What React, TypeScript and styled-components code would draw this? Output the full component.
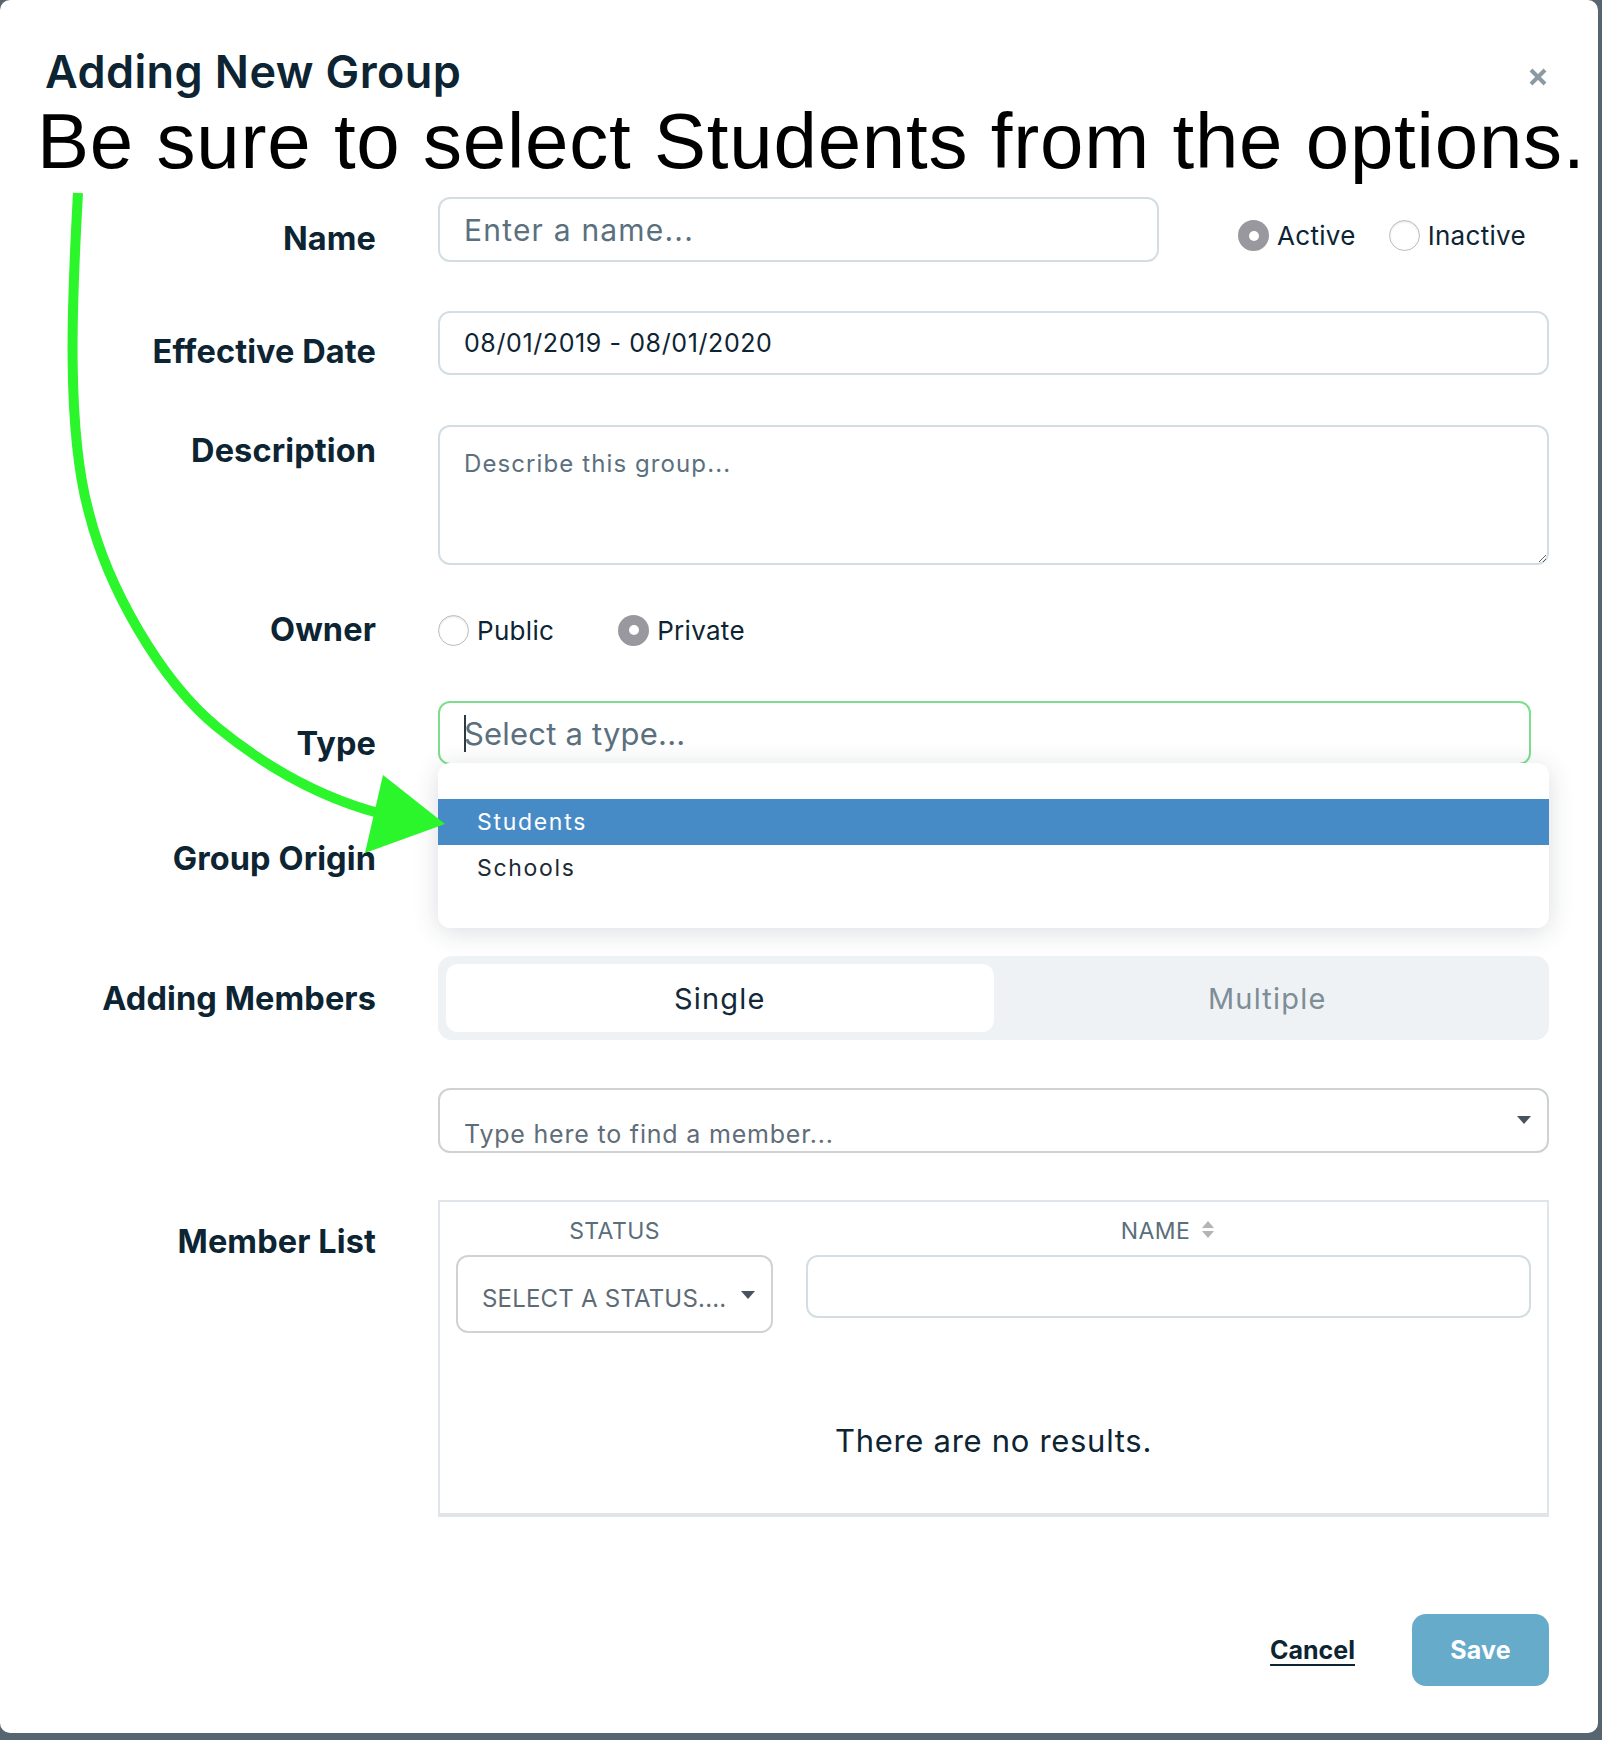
import React from 'react';
import styled, { createGlobalStyle } from 'styled-components';

const GlobalStyle = createGlobalStyle`
  html, body { margin: 0; padding: 0; }
  body { background: #56656f; font-family: Inter, "Open Sans", sans-serif; }
  * { box-sizing: border-box; }
`;

const Backdrop = styled.div`
  width: 1602px;
  height: 1740px;
  background: #56656f;
  overflow: hidden;
`;

const Modal = styled.div`
  position: relative;
  width: 1598px;
  height: 1733px;
  background: #ffffff;
  border-radius: 10px;
  display: flex;
  flex-direction: column;
  font-family: Inter, "Open Sans", sans-serif;
`;

const Header = styled.header`
  display: flex;
  justify-content: space-between;
  align-items: flex-start;
  padding: 49px 51px 0 45px;
`;

const Title = styled.h1`
  margin: 0;
  font-weight: 600;
  font-size: 45px;
  line-height: 46px;
  letter-spacing: 0.4px;
  color: #0d2433;
`;

const CloseButton = styled.button`
  margin-top: 19px;
  width: 18px;
  height: 18px;
  padding: 0;
  border: 0;
  background: none;
  display: flex;
`;

const Instruction = styled.p`
  margin: 8px 0 0;
  padding-left: 37px;
  font-family: "Liberation Sans", Arial, sans-serif;
  font-size: 78px;
  line-height: 77px;
  letter-spacing: 0.8px;
  color: #000;
  white-space: nowrap;
`;

const Form = styled.div`
  display: flex;
  flex-direction: column;
`;

const Row = styled.div<{ $mt: number; $h?: number }>`
  display: flex;
  align-items: flex-start;
  margin-top: ${(p) => p.$mt}px;
  ${(p) => (p.$h ? `height: ${p.$h}px;` : '')}
`;

const Label = styled.label<{ $pt: number }>`
  width: 376px;
  flex-shrink: 0;
  text-align: right;
  padding-top: ${(p) => p.$pt}px;
  font-weight: 700;
  font-size: 32.5px;
  line-height: 31px;
  letter-spacing: 0.1px;
  color: #0d2433;
  white-space: nowrap;
`;

const Control = styled.div<{ $h?: number }>`
  position: relative;
  margin-left: 62px;
  width: 1111px;
  display: flex;
  align-items: center;
  ${(p) => (p.$h ? `height: ${p.$h}px;` : '')}
`;

const TextField = styled.input<{ $w?: number; $h: number; $fs: number; $ls?: number }>`
  width: ${(p) => (p.$w ? `${p.$w}px` : '100%')};
  height: ${(p) => p.$h}px;
  flex-shrink: 0;
  border: 2px solid #d3dde2;
  border-radius: 12px;
  padding: 0 24px;
  font-family: Inter, "Open Sans", sans-serif;
  font-size: ${(p) => p.$fs}px;
  letter-spacing: ${(p) => p.$ls ?? 0}px;
  color: #0d2433;
  background: #fff;
  outline: none;
  &::placeholder {
    color: #5b707e;
    opacity: 1;
  }
`;

const TextArea = styled.textarea`
  width: 1111px;
  height: 140px;
  border: 2px solid #d3dde2;
  border-radius: 12px;
  padding: 23px 24px;
  font-family: Inter, "Open Sans", sans-serif;
  font-size: 24px;
  line-height: 28px;
  letter-spacing: 1.1px;
  color: #0d2433;
  resize: vertical;
  outline: none;
  &::placeholder {
    color: #5b707e;
    opacity: 1;
  }
`;

const RadioGroup = styled.div<{ $ml?: number; $gap: number }>`
  display: flex;
  align-items: center;
  gap: ${(p) => p.$gap}px;
  margin-left: ${(p) => p.$ml ?? 0}px;
  align-self: ${(p) => (p.$ml ? 'flex-start' : 'center')};
  margin-top: ${(p) => (p.$ml ? '23px' : '0')};
`;

const RadioOption = styled.label`
  display: flex;
  align-items: center;
  gap: 8px;
  font-size: 26px;
  line-height: 31px;
  letter-spacing: 0.3px;
  color: #0d2433;
`;

const RadioDot = styled.span<{ $checked?: boolean }>`
  width: 31px;
  height: 31px;
  border-radius: 50%;
  display: flex;
  align-items: center;
  justify-content: center;
  flex-shrink: 0;
  background: ${(p) => (p.$checked ? '#98989e' : '#fff')};
  border: ${(p) => (p.$checked ? '0' : '1px solid #bdbdbd')};
  box-shadow: ${(p) => (p.$checked ? 'none' : 'inset 0 1px 2px rgba(0,0,0,0.12)')};
  &::after {
    content: '';
    width: 10px;
    height: 10px;
    border-radius: 50%;
    background: #fff;
    display: ${(p) => (p.$checked ? 'block' : 'none')};
  }
`;

const TypeBox = styled.div`
  width: 1093px;
  height: 64px;
  border: 2px solid #7ddf8d;
  border-radius: 12px;
  padding: 0 24px;
  display: flex;
  align-items: center;
  font-size: 31px;
  letter-spacing: 0.2px;
  color: #5b707e;
`;

const TextCaret = styled.span`
  width: 2px;
  height: 37px;
  background: #2b3a44;
  margin-right: -2px;
`;

const Menu = styled.ul`
  position: absolute;
  top: 62px;
  left: 0;
  width: 1111px;
  height: 165px;
  margin: 0;
  padding: 36px 0 0;
  list-style: none;
  background: #fff;
  border-radius: 12px;
  box-shadow: 0 4px 26px rgba(30, 45, 60, 0.16);
  z-index: 2;
`;

const MenuItem = styled.li<{ $active?: boolean }>`
  height: 46px;
  display: flex;
  align-items: center;
  padding-left: 39px;
  font-size: 23px;
  letter-spacing: 1.7px;
  color: ${(p) => (p.$active ? '#ffffff' : '#1c2a34')};
  background: ${(p) => (p.$active ? '#468bc6' : 'transparent')};
`;

const PlainSelect = styled.div`
  width: 1111px;
  height: 64px;
  border: 2px solid #d3dde2;
  border-radius: 12px;
`;

const Segmented = styled.div`
  width: 1111px;
  height: 84px;
  background: #eef2f5;
  border-radius: 14px;
  padding: 8px;
  display: grid;
  grid-template-columns: 1fr 1fr;
`;

const Segment = styled.div<{ $active?: boolean }>`
  border-radius: 12px;
  background: ${(p) => (p.$active ? '#ffffff' : 'transparent')};
  display: flex;
  align-items: center;
  justify-content: center;
  font-size: 29px;
  letter-spacing: 1.2px;
  color: ${(p) => (p.$active ? '#13293a' : '#7f8d96')};
`;

const SearchSelect = styled.div`
  width: 1111px;
  height: 65px;
  border: 2px solid #cfd2d5;
  border-radius: 12px;
  padding: 0 16px 0 24px;
  display: flex;
  justify-content: space-between;
  align-items: flex-start;
`;

const SearchText = styled.span`
  margin-top: 32px;
  font-size: 25px;
  line-height: 25px;
  letter-spacing: 0.8px;
  color: #5f6d78;
`;

const DownCaret = styled.span<{ $mt: number }>`
  margin-top: ${(p) => p.$mt}px;
  width: 0;
  height: 0;
  border-left: 7.5px solid transparent;
  border-right: 7.5px solid transparent;
  border-top: 8px solid #48535d;
  flex-shrink: 0;
`;

const ListBox = styled.div`
  width: 1111px;
  height: 317px;
  border: 2px solid #dfe5ea;
  border-bottom-width: 4px;
  padding: 0 16px;
  display: flex;
  flex-direction: column;
`;

const ColumnRow = styled.div`
  display: flex;
  gap: 33px;
  align-items: flex-start;
`;

const Column = styled.div<{ $w?: number }>`
  ${(p) => (p.$w ? `width: ${p.$w}px; flex-shrink: 0;` : 'flex: 1;')}
  display: flex;
  flex-direction: column;
`;

const ColumnHead = styled.div`
  padding-top: 18px;
  height: 53px;
  display: flex;
  justify-content: center;
  align-items: flex-start;
  gap: 10px;
  font-size: 23px;
  line-height: 22px;
  letter-spacing: 0.4px;
  color: #5a6e7b;
`;

const StatusSelect = styled.div`
  height: 78px;
  border: 2px solid #cfd3d6;
  border-radius: 12px;
  padding: 0 16px 0 24px;
  display: flex;
  align-items: flex-start;
  gap: 15px;
`;

const StatusText = styled.span`
  margin-top: 29px;
  font-size: 24px;
  line-height: 25px;
  letter-spacing: 0.2px;
  color: #5e6a74;
  white-space: nowrap;
`;

const FilterInput = styled.div`
  height: 63px;
  border: 2px solid #d3dde2;
  border-radius: 12px;
`;

const Empty = styled.div`
  margin-top: 93px;
  text-align: center;
  font-size: 31px;
  line-height: 30px;
  letter-spacing: 0.7px;
  color: #0d2433;
`;

const SortIcon = styled.svg`
  flex-shrink: 0;
`;

const Footer = styled.div`
  width: 1549px;
  margin-top: 97px;
  display: flex;
  justify-content: flex-end;
  align-items: center;
  gap: 57px;
`;

const CancelLink = styled.a`
  font-weight: 700;
  font-size: 25px;
  color: #0d2433;
  text-decoration: underline;
  text-decoration-thickness: 2px;
  text-underline-offset: 5px;
  cursor: pointer;
`;

const SaveButton = styled.button`
  width: 137px;
  height: 72px;
  border: 0;
  border-radius: 14px;
  background: #67abcb;
  color: #ffffff;
  font-family: Inter, "Open Sans", sans-serif;
  font-weight: 700;
  font-size: 25px;
  letter-spacing: 0.2px;
`;

const Annotation = styled.svg`
  position: absolute;
  top: 0;
  left: 0;
  z-index: 3;
  pointer-events: none;
`;

export default function App() {
  return (
    <Backdrop>
      <GlobalStyle />
      <Modal>
        <Header>
          <Title>Adding New Group</Title>
          <CloseButton aria-label="Close">
            <svg width="18" height="18" viewBox="0 0 18 18">
              <path d="M2 2 L16 16 M16 2 L2 16" stroke="#8b9aa3" strokeWidth="4" strokeLinecap="butt" />
            </svg>
          </CloseButton>
        </Header>
        <Instruction>Be sure to select Students from the options.</Instruction>

        <Form>
          <Row $mt={17}>
            <Label $pt={26}>Name</Label>
            <Control>
              <TextField $w={721} $h={65} $fs={30} $ls={1.2} placeholder="Enter a name..." />
              <RadioGroup $ml={79} $gap={33}>
                <RadioOption>
                  <RadioDot $checked />
                  Active
                </RadioOption>
                <RadioOption>
                  <RadioDot />
                  Inactive
                </RadioOption>
              </RadioGroup>
            </Control>
          </Row>

          <Row $mt={49}>
            <Label $pt={25}>Effective Date</Label>
            <Control>
              <TextField $h={64} $fs={25} $ls={0.6} defaultValue="08/01/2019 - 08/01/2020" readOnly />
            </Control>
          </Row>

          <Row $mt={50}>
            <Label $pt={10}>Description</Label>
            <Control>
              <TextArea placeholder="Describe this group..." />
            </Control>
          </Row>

          <Row $mt={47}>
            <Label $pt={2}>Owner</Label>
            <Control $h={36}>
              <RadioGroup $gap={64}>
                <RadioOption>
                  <RadioDot />
                  Public
                </RadioOption>
                <RadioOption>
                  <RadioDot $checked />
                  Private
                </RadioOption>
              </RadioGroup>
            </Control>
          </Row>

          <Row $mt={53}>
            <Label $pt={27}>Type</Label>
            <Control>
              <TypeBox>
                <TextCaret />
                Select a type...
              </TypeBox>
              <Menu>
                <MenuItem $active>Students</MenuItem>
                <MenuItem>Schools</MenuItem>
              </Menu>
            </Control>
          </Row>

          <Row $mt={51}>
            <Label $pt={27}>Group Origin</Label>
            <Control>
              <PlainSelect />
            </Control>
          </Row>

          <Row $mt={76}>
            <Label $pt={27}>Adding Members</Label>
            <Control>
              <Segmented>
                <Segment $active>Single</Segment>
                <Segment>Multiple</Segment>
              </Segmented>
            </Control>
          </Row>

          <Row $mt={48}>
            <Label $pt={0} />
            <Control>
              <SearchSelect>
                <SearchText>Type here to find a member...</SearchText>
                <DownCaret $mt={26} />
              </SearchSelect>
            </Control>
          </Row>

          <Row $mt={47}>
            <Label $pt={26}>Member List</Label>
            <Control>
              <ListBox>
                <ColumnRow>
                  <Column $w={317}>
                    <ColumnHead>STATUS</ColumnHead>
                    <StatusSelect>
                      <StatusText>SELECT A STATUS....</StatusText>
                      <DownCaret $mt={34} />
                    </StatusSelect>
                  </Column>
                  <Column>
                    <ColumnHead>
                      NAME
                      <SortIcon width="16" height="20" viewBox="0 0 16 20">
                        <path d="M8 1 L14 8 L2 8 Z" fill="#b4b4b4" />
                        <path d="M2 11 L14 11 L8 18 Z" fill="#b4b4b4" />
                      </SortIcon>
                    </ColumnHead>
                    <FilterInput />
                  </Column>
                </ColumnRow>
                <Empty>There are no results.</Empty>
              </ListBox>
            </Control>
          </Row>
        </Form>

        <Footer>
          <CancelLink>Cancel</CancelLink>
          <SaveButton>Save</SaveButton>
        </Footer>

        <Annotation width="470" height="880" viewBox="0 0 470 880">
          <path
            d="M78 193 C72 300 66 430 89 513 C108 588 160 680 217 727 C267 768 320 798 382 814"
            fill="none"
            stroke="#2bf52b"
            strokeWidth="10"
          />
          <polygon points="383,775 445,824 365,853" fill="#2bf52b" />
        </Annotation>
      </Modal>
    </Backdrop>
  );
}
